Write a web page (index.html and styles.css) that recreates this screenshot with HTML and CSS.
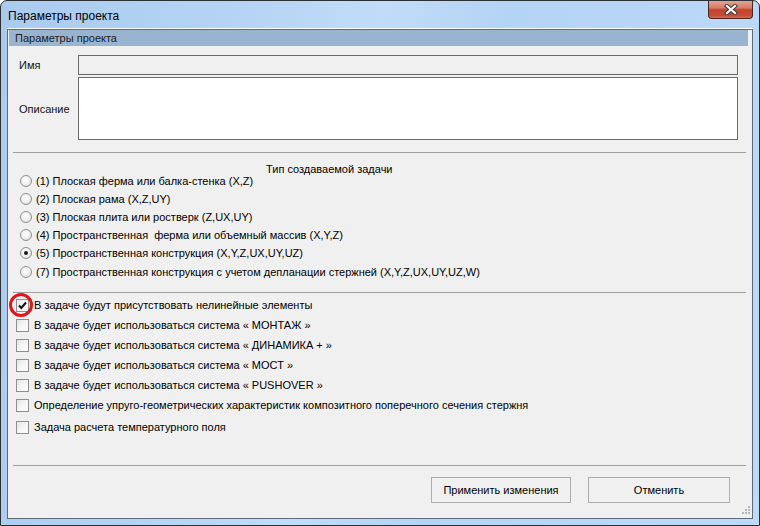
FILE: index.html
```html
<!DOCTYPE html>
<html lang="ru">
<head>
    <meta charset="UTF-8">
    <title>Параметры проекта</title>
    <link rel="stylesheet" href="styles.css">
</head>
<body>
    <div class="window">
        <div class="titlebar">
            <span class="title">Параметры проекта</span>
            <div class="close-btn">
                <svg width="14" height="11" viewBox="0 0 14 11">
                    <path d="M3 2 L11 9 M11 2 L3 9" stroke="#3b3b3b" stroke-width="4.2" stroke-linecap="square"/>
                    <path d="M3 2 L11 9 M11 2 L3 9" stroke="#ffffff" stroke-width="2.2" stroke-linecap="square"/>
                </svg>
            </div>
        </div>

        <div class="client">
            <div class="section-head">Параметры проекта</div>

            <div class="fields">
                <label class="field-label">Имя</label>
                <div class="input input-disabled"></div>
                <label class="field-label">Описание</label>
                <div class="input input-area"></div>
            </div>

            <div class="sep sep-first"></div>

            <div class="group-title">Тип создаваемой задачи</div>
            <div class="radio-list">
                <div class="radio-row"><span class="radio"></span>(1) Плоская ферма или балка-стенка (X,Z)</div>
                <div class="radio-row"><span class="radio"></span>(2) Плоская рама (X,Z,UY)</div>
                <div class="radio-row"><span class="radio"></span>(3) Плоская плита или ростверк (Z,UX,UY)</div>
                <div class="radio-row"><span class="radio"></span>(4) Пространственная&nbsp; ферма или объемный массив (X,Y,Z)</div>
                <div class="radio-row"><span class="radio checked"></span>(5) Пространственная конструкция (X,Y,Z,UX,UY,UZ)</div>
                <div class="radio-row radio-last"><span class="radio"></span>(7) Пространственная конструкция с учетом депланации стержней (X,Y,Z,UX,UY,UZ,W)</div>
            </div>

            <div class="sep sep-second"></div>

            <div class="check-list">
                <div class="check-row marked">
                    <span class="checkbox">
                        <svg width="11" height="11" viewBox="0 0 11 11">
                            <path d="M2 5.5 L4.3 8 L9 2.5" fill="none" stroke="#111" stroke-width="2"/>
                        </svg>
                    </span>В задаче будут присутствовать нелинейные элементы
                    <span class="red-ring"></span>
                </div>
                <div class="check-row"><span class="checkbox"></span>В задаче будет использоваться система « МОНТАЖ »</div>
                <div class="check-row"><span class="checkbox"></span>В задаче будет использоваться система « ДИНАМИКА + »</div>
                <div class="check-row"><span class="checkbox"></span>В задаче будет использоваться система « МОСТ »</div>
                <div class="check-row"><span class="checkbox"></span>В задаче будет использоваться система « PUSHOVER »</div>
                <div class="check-row"><span class="checkbox"></span>Определение упруго-геометрических характеристик композитного поперечного сечения стержня</div>
                <div class="check-row check-last"><span class="checkbox"></span>Задача расчета температурного поля</div>
            </div>

            <div class="sep sep-bottom"></div>

            <div class="buttons">
                <button class="btn btn-apply">Применить изменения</button>
                <button class="btn btn-cancel">Отменить</button>
            </div>

            <svg class="grip" width="12" height="12" viewBox="0 0 12 12">
                <rect x="9" y="1" width="2" height="2" fill="#b8b8b8"/>
                <rect x="6" y="4" width="2" height="2" fill="#b8b8b8"/>
                <rect x="9" y="4" width="2" height="2" fill="#b8b8b8"/>
                <rect x="3" y="7" width="2" height="2" fill="#b8b8b8"/>
                <rect x="6" y="7" width="2" height="2" fill="#b8b8b8"/>
                <rect x="9" y="7" width="2" height="2" fill="#b8b8b8"/>
            </svg>
        </div>
    </div>
</body>
</html>
```

FILE: styles.css
```css
html, body {
    margin: 0;
    padding: 0;
    background: #ffffff;
}

body {
    font-family: "Liberation Sans", Arial, sans-serif;
    font-size: 11px;
    color: #000;
}

.window {
    width: 760px;
    height: 526px;
    box-sizing: border-box;
    border: 1px solid #2c2f33;
    border-radius: 7px 7px 0 0;
    padding: 0 6px 6px 6px;
    background: linear-gradient(100deg, #a9cbee 0%, #b6d5f4 30%, #c0dcf8 45%, #b4d4f4 60%, #bddaf8 100%);
    display: flex;
    flex-direction: column;
}

/* title bar */
.titlebar {
    height: 27px;
    border-bottom: 1px solid #ffffff;
    display: flex;
    justify-content: space-between;
    align-items: flex-start;
}

.title {
    font-size: 12px;
    color: #000;
    margin-top: 8px;
    margin-left: 1px;
}

.close-btn {
    width: 45px;
    height: 18px;
    box-sizing: border-box;
    border: 1px solid #4d2420;
    border-top: none;
    border-radius: 0 0 4px 4px;
    background: linear-gradient(#e3a493 0%, #d67d67 40%, #c2432d 52%, #c74c35 85%, #d66e55 100%);
    display: flex;
    justify-content: center;
    align-items: center;
}

/* client area */
.client {
    position: relative;
    height: 490px;
    box-sizing: border-box;
    border: 1px solid #5d6b7a;
    background: #f0f0f0;
    display: flex;
    flex-direction: column;
}

.section-head {
    height: 16px;
    line-height: 16px;
    margin: 0 4px 0 1px;
    padding-left: 6px;
    background-color: #99b4d1;
    color: #1c1c1c;
}

.fields {
    display: grid;
    grid-template-columns: 59px 1fr;
    grid-template-rows: 20px 63px;
    row-gap: 2px;
    align-items: center;
    margin-top: 9px;
    padding: 0 14px 0 11px;
}

.field-label {
    color: #111;
}

.input {
    height: 100%;
    box-sizing: border-box;
    border: 1px solid #6a6a6a;
}

.input-disabled {
    background-color: #f0f0f0;
}

.input-area {
    background-color: #ffffff;
}

.sep {
    height: 0;
    border-top: 1px solid #a0a0a0;
    margin-left: 5px;
    margin-right: 6px;
}

.sep-first {
    margin-top: 12px;
}

.group-title {
    line-height: 13px;
    margin-top: 10px;
    padding-left: 258px;
}

/* radio list */
.radio-list {
    margin-top: -4px;
}

.radio-row {
    height: 18px;
    display: flex;
    align-items: center;
    gap: 4px;
    padding-left: 12px;
    white-space: pre;
}

.radio-last {
    margin-top: 1px;
}

.radio {
    width: 12px;
    height: 12px;
    box-sizing: border-box;
    border: 1px solid #8f8f8f;
    border-radius: 50%;
    background: radial-gradient(circle at 45% 40%, #ffffff 0%, #f2f2f2 45%, #d6d6d6 100%);
    position: relative;
}

.radio.checked::after {
    content: "";
    position: absolute;
    left: 3px;
    top: 3px;
    width: 4px;
    height: 4px;
    border-radius: 50%;
    background: #1a1a1a;
}

.sep-second {
    margin-top: 11px;
}

/* check list */
.check-list {
    margin-top: 2px;
}

.check-row {
    position: relative;
    height: 20px;
    display: flex;
    align-items: center;
    gap: 5px;
    padding-left: 8px;
}

.check-last {
    margin-top: 2px;
}

.checkbox {
    width: 13px;
    height: 13px;
    box-sizing: border-box;
    border: 1px solid #8e8f8f;
    background: linear-gradient(135deg, #e4e4e4 0%, #f6f6f6 50%, #ffffff 100%);
    display: flex;
    justify-content: center;
    align-items: center;
}

.red-ring {
    position: absolute;
    left: 1px;
    top: -2px;
    width: 24px;
    height: 24px;
    box-sizing: border-box;
    border: 3px solid #e3141b;
    border-radius: 50%;
}

.sep-bottom {
    margin-top: auto;
}

/* buttons */
.buttons {
    display: flex;
    justify-content: flex-end;
    gap: 17px;
    margin-top: 11px;
    padding-right: 22px;
    padding-bottom: 15px;
}

.btn {
    height: 26px;
    box-sizing: border-box;
    border: 1px solid #adadad;
    background-color: #f0f0f0;
    font-family: "Liberation Sans", Arial, sans-serif;
    font-size: 11px;
    color: #000;
    padding: 0;
}

.btn-apply {
    width: 140px;
}

.btn-cancel {
    width: 142px;
}

.grip {
    position: absolute;
    right: 1px;
    bottom: 1px;
}
```
